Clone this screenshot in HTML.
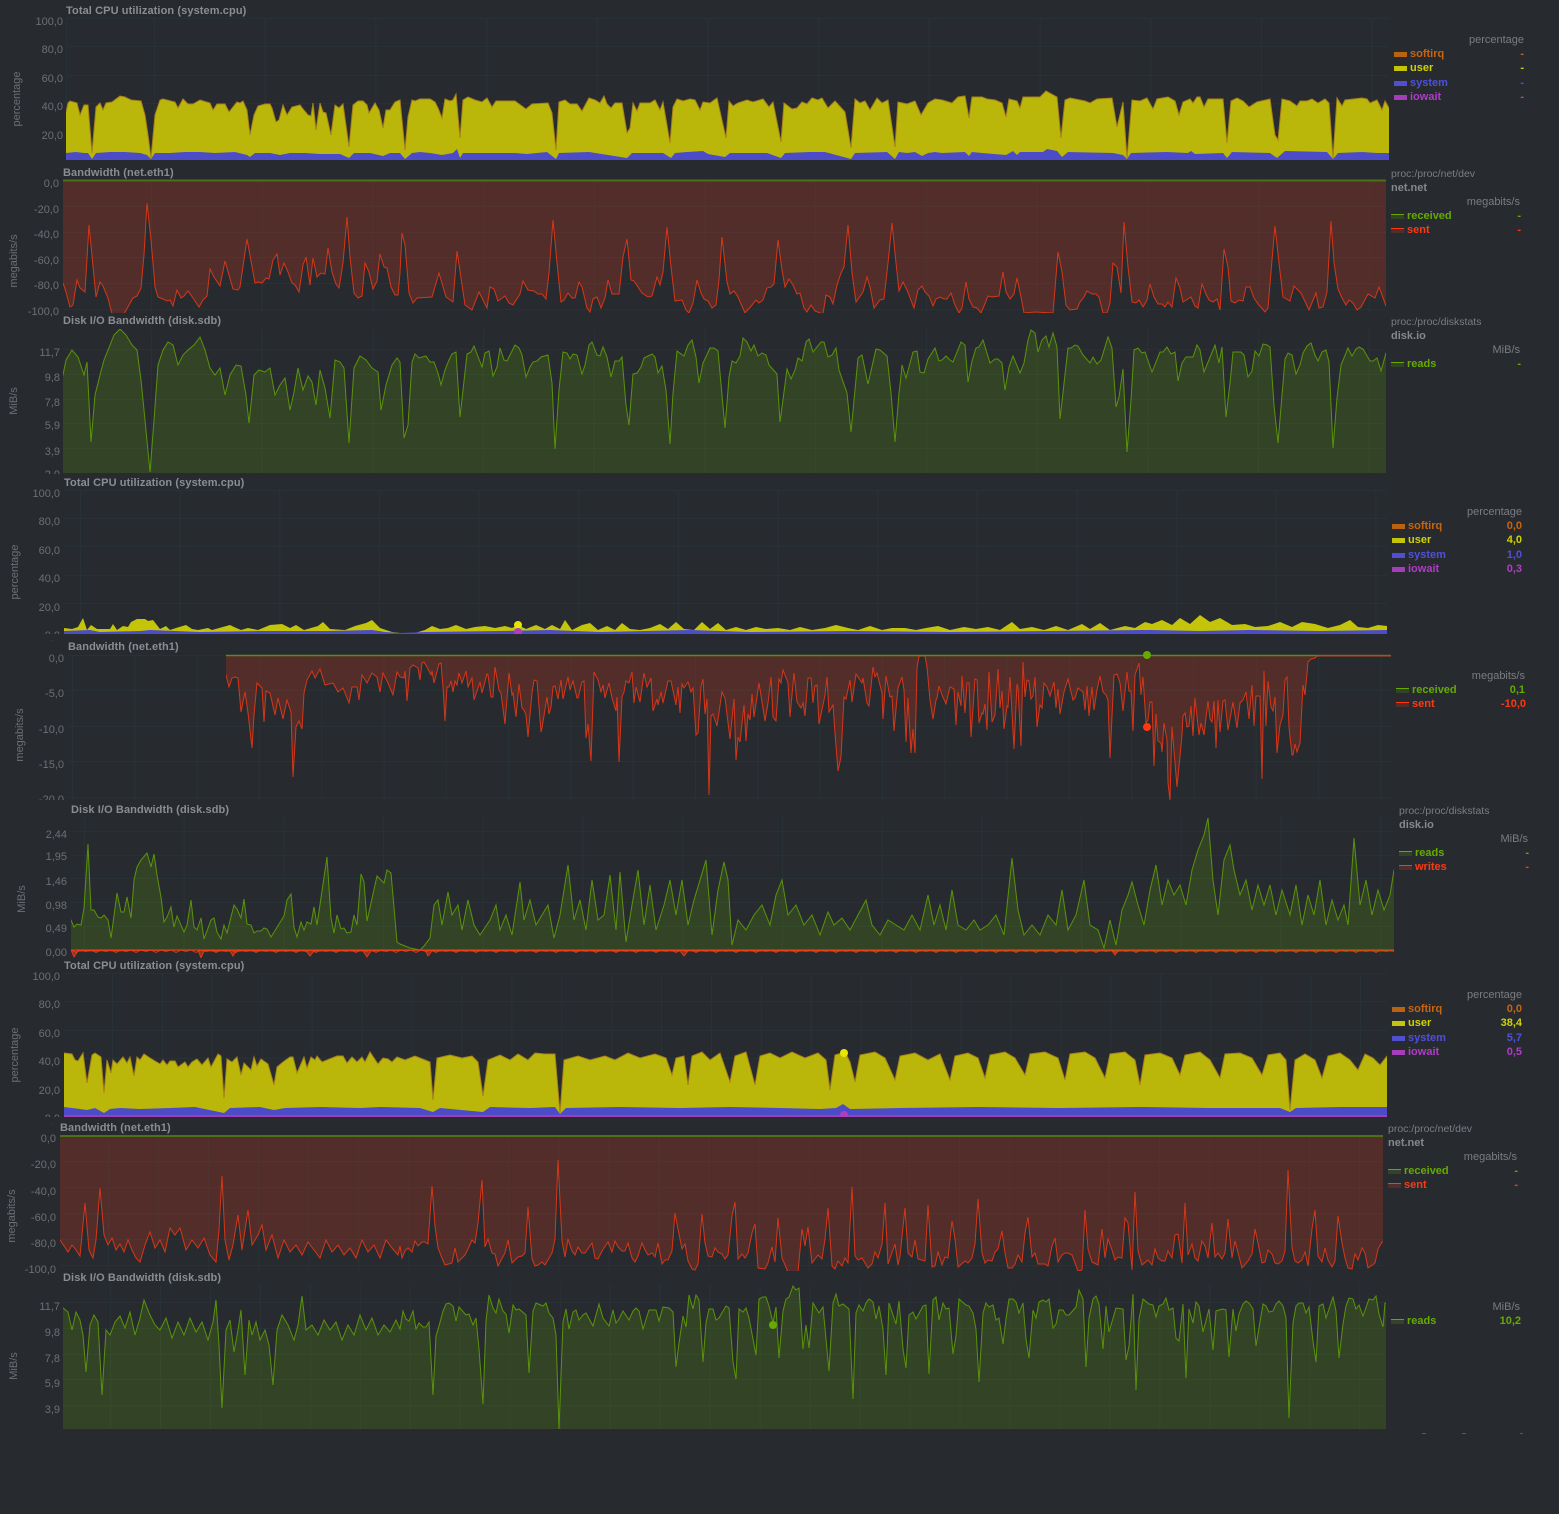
<!DOCTYPE html>
<html lang="en"><head><meta charset="utf-8"><title>Netdata charts</title>
<style>
html,body{margin:0;padding:0;background:#272b30;width:1559px;height:1514px;overflow:hidden}
svg{display:block}
text{font-family:"Liberation Sans",sans-serif;font-size:11px;fill:#6c7075}
.t{font-weight:bold;fill:#8a8d91;letter-spacing:.1px}
.c{fill:#7a7d81}
.p{fill:#7a7d81;font-size:10.500px}
.b{font-weight:bold;fill:#85888c}
.l{font-weight:bold}
.e{text-anchor:end}
.y{text-anchor:end}
.r{text-anchor:middle;fill:#6c7075}
.so{fill:#c8640f}.us{fill:#d2d200}.sy{fill:#4f4fdc}.io{fill:#ae3cc4}.gr{fill:#66aa00}.re{fill:#fe3912}
.g{stroke:#283236;stroke-width:1;fill:none}
.red{fill:#fe3912;fill-opacity:.2;stroke:#fe3912;stroke-opacity:.8;stroke-width:1}
.grn{fill:#66aa00;fill-opacity:.2;stroke:#66aa00;stroke-opacity:.8;stroke-width:1}
.user{fill:#bbb70a;stroke:#a8801a;stroke-width:1}
.sys{fill:#4c4cc8}
.iow{fill:#a03cb4}
</style></head><body>
<svg width="1559" height="1514" viewBox="0 0 1559 1514" xmlns="http://www.w3.org/2000/svg">
<defs><pattern id="w" x="71" y="947" width="20" height="10" patternUnits="userSpaceOnUse"><path d="M0,3 5,5.500 10,3 15,4.500 20,3" fill="none" stroke="#fe3912" stroke-opacity=".8"/></pattern></defs>

<!-- CHART 1 -->
<text class="t" x="66" y="14">Total CPU utilization (system.cpu)</text>
<path class="g" d="M66 18.500H1389M66 46.500H1389M66 75.500H1389M66 103.500H1389M66 132.500H1389"/>
<line x1="66" y1="89" x2="67" y2="89" stroke="#283236" stroke-width="142"/>
<line x1="154" y1="89" x2="1389" y2="89" stroke="#283236" stroke-width="142" stroke-dasharray="1 109.700"/>
<g class="y"><text class="y" x="63" y="25">100,0</text><text class="y" x="63" y="53">80,0</text><text class="y" x="63" y="82">60,0</text><text class="y" x="63" y="110">40,0</text><text class="y" x="63" y="139">20,0</text></g>
<text class="r" transform="translate(20 99) rotate(-90)">percentage</text>
<svg x="66" y="18" width="1323" height="142" viewBox="66 18 1323 142">
<path class="user" d="M50,112 66,112 68,103 70,101 77,103 80,115 84,105 88,105 92,153 96,107 100,103 103,110 106,103 112,102 120,96 125,97 131,100 141,101 145,115 148,135 151,158 155,115 160,100 163,99 175,102 178,108 183,99 188,104 193,104 200,100 210,103 213,110 217,104 225,104 229,112 237,102 240,103 243,101 247,110 250,135 254,115 258,106 265,104 270,104 272,108 276,122 279,120 283,105 287,115 292,107 300,105 303,109 308,115 311,116 313,103 316,130 320,103 323,112 326,113 331,135 335,105 339,108 343,104 349,147 353,105 358,101 363,101 367,105 369,113 375,103 379,110 383,128 386,110 390,110 395,102 400,100 405,150 408,117 412,100 415,101 420,99 430,99 435,102 438,108 442,118 445,99 450,101 453,100 456,94 460,138 463,100 468,97 475,100 482,102 487,98 492,107 496,101 515,101 526,109 532,104 548,103 552,113 556,150 559,102 565,100 570,104 577,104 582,111 589,98 595,100 600,103 604,96 607,104 611,108 615,103 622,103 627,133 630,128 633,103 637,111 640,103 650,103 655,100 660,110 663,102 670,143 673,107 677,99 683,101 690,99 695,100 700,110 703,102 710,103 717,98 726,138 729,101 733,106 738,103 747,100 753,102 763,99 769,107 773,102 781,142 784,103 792,109 797,108 802,102 807,104 812,98 818,100 822,98 828,108 835,101 845,112 851,148 855,99 860,103 865,101 870,110 877,98 882,103 888,100 895,147 898,102 907,104 915,101 921,115 928,103 935,99 942,100 952,103 958,97 965,96 969,118 972,97 982,97 987,99 995,100 1002,103 1006,117 1009,99 1017,101 1020,108 1023,97 1040,97 1046,91 1057,97 1061,138 1065,100 1070,98 1085,101 1090,103 1097,99 1112,98 1117,127 1123,102 1127,158 1132,100 1140,101 1147,98 1153,109 1157,99 1168,97 1175,101 1179,115 1183,102 1190,99 1193,103 1197,97 1200,97 1204,107 1208,99 1223,99 1227,143 1231,101 1237,98 1243,101 1249,107 1257,102 1270,99 1275,135 1278,140 1282,99 1290,101 1297,106 1300,101 1307,101 1312,99 1318,103 1325,99 1329,103 1333,158 1337,98 1342,106 1345,100 1362,98 1367,99 1370,103 1377,100 1382,110 1385,101 1389,108 1400,108 V175 H50 Z"/>
<path class="sys" d="M66,153 76,152 84,153 88,153 92,159 96,153 110,152 125,152 140,153 147,155 151,159 155,153 170,153 185,152 200,152 215,153 235,152 247,155 250,157 255,153 270,153 280,155 290,153 305,153 320,154 340,154 349,158 354,153 370,153 383,156 390,153 400,153 405,159 412,153 420,152 430,153 442,155 453,153 457,149 460,158 463,153 515,153 527,154 547,152 556,159 559,153 589,152 627,158 632,153 663,153 671,158 675,153 687,152 703,151 708,154 725,157 730,153 767,153 781,158 785,153 810,152 825,152 851,159 855,153 887,152 895,159 899,152 907,153 915,152 922,156 928,153 935,152 942,153 965,152 969,156 972,152 982,153 1006,155 1013,151 1017,155 1020,152 1043,152 1047,149 1057,151 1062,157 1068,152 1113,153 1123,155 1127,159 1131,153 1167,152 1188,153 1191,151 1195,154 1223,153 1227,158 1232,152 1270,153 1277,158 1285,151 1327,152 1333,159 1338,153 1362,152 1377,153 1389,153 V175 H66 Z"/>
</svg>
<text class="c e" x="1524" y="43">percentage</text>
<rect x="1394" y="52" width="13" height="5" fill="#b9620f"/><text class="l so" x="1410" y="57">softirq</text><text class="l so e" x="1524" y="57">-</text>
<rect x="1394" y="66" width="13" height="5" fill="#c4c40a"/><text class="l us" x="1410" y="71">user</text><text class="l us e" x="1524" y="71">-</text>
<rect x="1394" y="81" width="13" height="5" fill="#4f4fd0"/><text class="l sy" x="1410" y="86">system</text><text class="l sy e" x="1524" y="86">-</text>
<rect x="1394" y="95" width="13" height="5" fill="#a53cb8"/><text class="l io" x="1410" y="100">iowait</text><text class="l io e" x="1524" y="100">-</text>

<!-- CHART 2 -->
<text class="t" x="63" y="176">Bandwidth (net.eth1)</text>
<path class="g" d="M63 206.500H1386M63 232.500H1386M63 257.500H1386M63 283.500H1386M63 309.500H1386"/>
<line x1="151" y1="247" x2="1386" y2="247" stroke="#283236" stroke-width="132" stroke-dasharray="1 109.700"/>
<text class="y" x="59" y="187">0,0</text><text class="y" x="59" y="213">-20,0</text><text class="y" x="59" y="238">-40,0</text><text class="y" x="59" y="264">-60,0</text><text class="y" x="59" y="289">-80,0</text><text class="y" x="59" y="315">-100,0</text>
<text class="r" transform="translate(17 261) rotate(-90)">megabits/s</text>
<svg x="63" y="181" width="1323" height="132" viewBox="63 181 1323 132">
<path class="red" d="M50,283 63,283 66,292 70,307 73,305 77,280 80,288 85,292 89,225 96,297 100,282 103,286 108,298 112,314 124,314 129,305 133,298 137,296 141,288 144,255 147,203 151,240 155,287 158,297 163,299 167,301 170,300 173,306 177,290 181,298 184,296 188,291 193,298 199,307 203,300 207,296 210,269 214,277 220,286 225,261 233,289 238,290 240,287 247,239 255,283 258,282 262,283 266,278 269,279 273,260 277,254 280,275 284,263 288,272 292,283 295,285 299,292 303,265 306,257 310,285 313,258 317,277 321,273 325,274 328,248 332,272 336,284 339,288 343,263 347,217 350,257 354,293 358,298 362,296 365,263 369,272 373,289 377,281 380,254 384,267 387,268 391,287 395,295 398,295 400,273 402,233 405,245 409,293 413,303 417,298 432,297 439,273 446,297 453,302 457,251 465,305 472,310 479,292 487,308 490,287 494,289 498,301 505,296 509,303 513,305 520,294 523,281 528,290 534,291 538,294 542,294 546,299 549,273 553,220 557,263 561,302 564,300 568,293 572,298 575,298 579,282 582,287 587,308 590,312 593,299 597,297 601,308 605,298 608,280 612,294 619,294 623,257 627,239 631,280 634,281 642,293 648,297 652,296 657,277 660,285 663,272 667,227 671,267 675,301 682,300 686,310 689,313 693,303 697,280 701,293 704,299 708,301 712,308 716,305 719,280 722,237 727,282 730,294 734,291 738,297 745,313 752,305 756,300 759,303 763,300 767,288 771,287 774,284 778,240 782,270 785,287 789,279 793,285 797,294 800,293 804,308 807,312 811,305 815,311 823,314 826,295 830,297 833,304 837,285 841,273 844,267 848,225 852,273 856,302 863,292 867,277 870,287 874,308 880,300 884,299 888,263 892,223 896,263 899,291 903,282 907,290 914,308 918,290 922,286 925,292 929,296 933,306 936,299 940,297 944,299 947,299 951,293 955,305 959,313 962,308 966,282 969,299 973,307 977,308 981,313 984,306 988,296 992,297 999,296 1003,272 1006,292 1010,299 1014,294 1017,278 1021,297 1024,313 1035,312 1053,313 1058,252 1062,272 1066,305 1070,310 1077,309 1080,302 1084,297 1087,291 1092,294 1096,294 1099,297 1103,313 1107,313 1110,303 1113,263 1117,267 1121,293 1124,222 1128,267 1132,302 1136,303 1139,300 1143,307 1147,300 1150,284 1154,297 1158,304 1162,304 1165,307 1168,302 1172,307 1176,278 1180,288 1183,302 1191,297 1195,306 1198,308 1202,284 1206,294 1209,300 1213,302 1217,299 1220,310 1224,249 1228,267 1231,301 1235,303 1239,300 1243,301 1246,287 1250,287 1254,298 1258,304 1265,312 1268,308 1272,260 1275,226 1279,263 1283,297 1290,301 1294,286 1301,293 1309,310 1316,293 1319,308 1323,307 1327,292 1331,221 1334,263 1338,289 1342,298 1346,305 1349,300 1353,303 1357,310 1361,307 1368,294 1375,298 1379,287 1386,306 1400,306 V170 H50 Z"/>
</svg>
<path d="M63 180.500H1386" stroke="#4c7018" stroke-width="2" fill="none"/>
<text class="p" x="1391" y="177">proc:/proc/net/dev</text><text class="b" x="1391" y="191">net.net</text>
<text class="c e" x="1520" y="205">megabits/s</text>
<rect x="1391" y="214" width="13" height="5" fill="#334426"/><rect x="1391" y="214" width="13" height="1" fill="#66aa00"/><text class="l gr" x="1407" y="219">received</text><text class="l gr e" x="1521" y="219">-</text>
<rect x="1391" y="228" width="13" height="5" fill="#522e2a"/><rect x="1391" y="228" width="13" height="1" fill="#fe3912"/><text class="l re" x="1407" y="233">sent</text><text class="l re e" x="1521" y="233">-</text>

<!-- CHART 3 -->
<text class="t" x="63" y="324">Disk I/O Bandwidth (disk.sdb)</text>
<path class="g" d="M63 349.500H1386M63 374.500H1386M63 399.500H1386M63 423.500H1386M63 448.500H1386"/>
<line x1="151" y1="401" x2="1386" y2="401" stroke="#283236" stroke-width="144" stroke-dasharray="1 109.700"/>
<text class="y" x="60" y="356">11,7</text><text class="y" x="60" y="381">9,8</text><text class="y" x="60" y="406">7,8</text><text class="y" x="60" y="429">5,9</text><text class="y" x="60" y="455">3,9</text><text class="y" x="60" y="478">2,0</text>
<text class="r" transform="translate(17 401) rotate(-90)">MiB/s</text>
<rect x="20" y="474" width="50" height="6" fill="#272b30"/>
<svg x="63" y="329" width="1323" height="144" viewBox="63 329 1323 144">
<path class="grn" d="M50,375 63,375 66,360 72,350 78,357 84,375 87,362 91,442 95,395 100,375 104,360 110,345 114,335 120,329 126,335 132,345 137,350 141,380 145,420 150,472 154,420 158,365 163,350 168,342 173,345 178,365 183,355 188,350 194,345 200,337 205,350 210,368 215,375 220,368 225,395 230,375 236,365 241,366 246,395 249,423 254,375 259,370 265,372 270,368 275,395 280,385 285,378 290,410 294,392 298,368 303,390 308,376 312,382 316,405 320,370 325,388 330,418 335,360 340,362 344,368 349,443 354,368 360,356 366,360 372,368 378,372 381,410 386,385 392,365 397,358 400,362 404,438 408,425 412,362 415,354 419,358 426,356 430,362 434,362 438,373 441,385 445,370 449,360 452,354 456,352 460,417 467,354 471,352 474,346 482,367 485,353 489,351 493,376 497,367 500,348 504,360 507,361 515,345 519,348 522,355 526,377 530,367 533,362 537,361 541,357 548,355 552,383 555,449 559,390 563,352 567,353 570,359 573,354 577,355 582,374 585,365 589,345 592,342 597,355 600,356 603,347 607,357 611,377 615,361 619,361 622,357 626,405 629,425 633,374 637,373 641,367 644,358 652,354 655,357 658,373 662,366 666,390 670,444 673,393 677,351 684,356 688,345 692,340 696,357 699,383 703,363 710,348 714,348 718,351 725,428 729,377 732,361 736,363 740,356 743,338 747,342 751,351 754,345 758,356 762,353 766,355 769,365 777,374 780,422 787,369 791,379 795,370 798,358 802,361 806,342 809,339 813,352 821,342 824,342 828,357 832,355 836,348 839,370 847,393 851,432 858,358 862,355 868,384 876,349 880,350 887,356 891,393 895,442 899,393 900,385 902,365 906,378 913,352 917,351 920,372 924,373 928,359 935,348 939,361 942,360 946,356 950,360 953,362 961,342 965,345 968,382 972,361 976,348 979,347 983,340 990,363 995,359 998,359 1002,363 1005,390 1009,367 1013,356 1020,373 1024,363 1028,340 1031,330 1035,333 1038,352 1042,340 1046,336 1049,347 1053,333 1057,347 1060,419 1068,348 1071,348 1075,345 1078,346 1083,355 1090,363 1093,357 1097,364 1101,360 1108,337 1112,348 1116,407 1119,397 1123,369 1127,452 1131,400 1134,350 1138,348 1142,353 1145,352 1152,372 1160,352 1163,352 1167,347 1171,354 1175,352 1178,381 1182,363 1186,357 1193,357 1197,345 1200,350 1204,372 1215,345 1219,363 1222,347 1226,417 1230,383 1233,352 1241,352 1244,355 1248,377 1252,371 1255,351 1259,356 1263,344 1267,345 1270,347 1274,405 1278,443 1285,359 1288,353 1292,355 1296,374 1300,365 1303,353 1307,346 1311,343 1315,355 1318,361 1322,352 1326,350 1329,362 1333,448 1337,398 1341,365 1348,348 1352,356 1356,349 1359,347 1363,349 1370,361 1373,361 1377,358 1381,371 1386,353 1400,353 V490 H50 Z"/>
</svg>
<text class="p" x="1391" y="325">proc:/proc/diskstats</text><text class="b" x="1391" y="339">disk.io</text>
<text class="c e" x="1520" y="353">MiB/s</text>
<rect x="1391" y="362" width="13" height="5" fill="#334426"/><rect x="1391" y="362" width="13" height="1" fill="#66aa00"/><text class="l gr" x="1407" y="367">reads</text><text class="l gr e" x="1521" y="367">-</text>

<!-- CHART 4 -->
<text class="t" x="64" y="486">Total CPU utilization (system.cpu)</text>
<path class="g" d="M64 490.500H1387M64 518.500H1387M64 546.500H1387M64 575.500H1387M64 603.500H1387"/>
<line x1="80" y1="562" x2="1387" y2="562" stroke="#283236" stroke-width="144" stroke-dasharray="1 98.650"/>
<text class="y" x="60" y="497">100,0</text><text class="y" x="60" y="525">80,0</text><text class="y" x="60" y="554">60,0</text><text class="y" x="60" y="582">40,0</text><text class="y" x="60" y="611">20,0</text><text class="y" x="60" y="639">0,0</text>
<text class="r" transform="translate(18 572) rotate(-90)">percentage</text>
<rect x="20" y="634" width="50" height="6" fill="#272b30"/>
<svg x="64" y="490" width="1323" height="144" viewBox="64 490 1323 144">
<path d="M64,628 72,629 78,627 83,618 87,630 91,625 97,629 110,629 113,624 117,630 123,626 128,627 131,622 137,619 145,619 148,621 153,620 160,629 166,626 170,630 176,628 186,625 192,629 198,630 208,628 212,630 230,625 234,627 241,630 248,628 258,630 270,625 282,624 290,628 296,625 304,630 318,626 323,622 330,629 345,630 355,626 366,623 372,620 380,628 392,632 400,633 415,633 425,630 432,626 440,629 448,628 456,625 466,629 475,627 485,626 495,628 505,626 512,628 518,625 526,629 536,625 545,629 552,625 560,629 565,620 572,630 582,625 590,623 598,630 607,626 615,630 622,623 630,629 640,630 650,628 660,624 668,629 676,622 684,629 694,630 702,622 710,629 718,623 726,630 736,627 746,630 756,627 766,629 778,628 790,630 800,627 812,630 825,628 836,625 848,628 858,630 870,626 882,630 892,628 905,628 916,630 926,628 938,626 950,630 964,627 976,629 988,627 1000,630 1012,622 1020,629 1032,627 1044,630 1056,626 1068,630 1082,624 1090,629 1100,623 1110,630 1125,626 1135,628 1145,622 1152,624 1162,620 1172,625 1180,618 1190,624 1200,615 1210,622 1220,618 1232,625 1245,624 1255,627 1268,626 1280,622 1292,627 1302,622 1315,624 1328,628 1340,625 1350,620 1358,627 1368,628 1378,625 1387,626 V650 H64 Z" fill="#c4c40a"/>
<path class="sys" d="M64,631 90,630 100,632 140,631 150,630 200,632 260,631 330,631 372,630 385,632 400,633 425,632 500,631 550,630 600,632 690,630 750,632 850,631 950,632 1050,631 1150,630 1200,631 1250,630 1320,631 1387,630 V650 H64 Z"/>
</svg>
<circle cx="518" cy="625" r="4" fill="#e6e600"/>
<circle cx="518" cy="632" r="4" fill="#ae3cc4"/>
<rect x="510" y="634" width="20" height="4" fill="#272b30"/>
<text class="c e" x="1522" y="515">percentage</text>
<rect x="1392" y="524" width="13" height="5" fill="#b9620f"/><text class="l so" x="1408" y="529">softirq</text><text class="l so e" x="1522" y="529">0,0</text>
<rect x="1392" y="538" width="13" height="5" fill="#c4c40a"/><text class="l us" x="1408" y="543">user</text><text class="l us e" x="1522" y="543">4,0</text>
<rect x="1392" y="553" width="13" height="5" fill="#4f4fd0"/><text class="l sy" x="1408" y="558">system</text><text class="l sy e" x="1522" y="558">1,0</text>
<rect x="1392" y="567" width="13" height="5" fill="#a53cb8"/><text class="l io" x="1408" y="572">iowait</text><text class="l io e" x="1522" y="572">0,3</text>

<!-- CHART 5 -->
<text class="t" x="68" y="650">Bandwidth (net.eth1)</text>
<path class="g" d="M68 655.500H1391M68 690.500H1391M68 726.500H1391M68 761.500H1391M68 797.500H1391"/>
<line x1="72" y1="728" x2="1391" y2="728" stroke="#283236" stroke-width="145" stroke-dasharray="1 61.300"/>
<text class="y" x="64" y="662">0,0</text><text class="y" x="64" y="697">-5,0</text><text class="y" x="64" y="733">-10,0</text><text class="y" x="64" y="768">-15,0</text><text class="y" x="64" y="803">-20,0</text>
<rect x="30" y="800" width="36" height="6" fill="#272b30"/>
<text class="r" transform="translate(23 735) rotate(-90)">megabits/s</text>
<svg x="226" y="655" width="1165" height="145" viewBox="226 655 1165 145">
<path class="red" d="M215,675 226,675 229,687 232,678 235,677 238,678 241,712 245,692 248,713 252,748 254,715 257,683 262,688 264,722 266,691 270,693 275,715 278,698 283,719 287,700 291,712 293,777 296,727 299,721 302,729 304,693 307,680 312,671 315,678 320,669 325,685 333,683 338,692 343,688 349,703 352,687 357,687 359,700 362,675 367,683 372,673 377,677 380,692 383,673 388,683 393,695 397,672 400,677 404,678 405,671 407,701 410,668 413,665 418,668 420,680 422,663 424,662 427,667 431,675 432,671 434,683 439,664 441,663 443,687 445,721 447,687 449,687 451,681 453,692 455,681 457,685 459,673 462,683 466,671 468,687 472,678 474,700 480,682 482,693 487,674 488,675 491,697 493,697 495,667 499,690 501,693 505,724 509,673 512,695 513,693 516,717 519,684 522,708 524,710 526,715 528,737 532,693 534,680 537,681 541,732 542,728 547,697 549,714 551,707 553,687 555,686 558,699 561,680 563,699 568,677 570,690 573,681 577,698 578,698 582,682 584,681 586,738 588,724 591,761 594,672 598,680 601,692 603,685 605,698 609,683 612,698 616,711 617,697 619,762 622,697 624,692 626,681 629,683 632,672 634,703 636,687 640,702 644,673 647,687 651,678 653,711 657,699 658,705 661,692 663,703 668,681 671,681 676,705 678,687 680,713 682,684 684,688 688,682 691,692 693,688 696,735 698,733 701,687 703,679 705,714 707,699 709,795 711,716 713,714 717,726 722,692 725,698 730,739 734,699 736,760 738,737 740,742 744,705 746,741 748,714 750,720 752,694 754,717 759,683 765,721 768,703 771,677 773,717 776,721 779,679 781,683 783,670 788,683 790,717 794,673 797,702 801,708 803,703 805,716 808,678 811,678 813,703 815,686 817,685 819,724 825,695 827,677 829,712 833,705 835,733 838,771 841,757 844,697 846,699 850,680 852,702 856,674 862,683 863,678 867,703 869,706 873,667 875,677 877,673 882,693 883,719 886,676 890,697 892,696 894,731 898,688 902,677 904,690 906,742 908,698 911,753 913,729 915,753 917,668 919,656 925,656 927,667 930,700 933,719 936,700 937,698 939,686 942,695 946,704 950,687 954,689 956,725 958,692 961,706 962,676 965,713 967,683 969,683 971,737 975,679 977,680 979,723 982,713 983,714 985,704 987,730 989,672 992,722 995,715 998,669 1000,708 1002,691 1004,729 1007,706 1008,707 1010,677 1014,749 1017,684 1018,688 1021,746 1023,662 1025,697 1027,680 1029,681 1031,699 1033,696 1035,677 1037,727 1040,705 1042,708 1044,683 1047,687 1050,696 1054,682 1056,708 1058,689 1060,714 1064,692 1068,679 1073,700 1075,698 1078,688 1083,692 1085,710 1087,686 1089,716 1092,687 1094,710 1097,690 1100,676 1103,692 1106,695 1108,700 1110,758 1114,675 1117,674 1120,683 1123,711 1127,672 1129,691 1131,691 1133,731 1135,675 1139,663 1141,695 1143,677 1146,723 1148,720 1150,702 1152,702 1154,766 1156,714 1158,741 1161,743 1162,752 1164,723 1167,740 1168,783 1170,800 1172,727 1177,787 1182,735 1183,716 1185,713 1187,727 1189,726 1191,706 1193,736 1195,698 1199,735 1201,723 1204,735 1208,701 1210,719 1212,722 1214,701 1216,748 1218,700 1220,732 1223,701 1225,700 1228,730 1233,702 1237,728 1240,703 1243,700 1246,692 1249,719 1252,685 1254,726 1256,696 1260,696 1262,779 1264,671 1266,726 1268,681 1271,707 1273,711 1275,697 1277,753 1280,725 1283,715 1285,680 1287,677 1289,727 1292,755 1293,755 1295,744 1297,752 1300,743 1303,685 1305,695 1308,662 1311,659 1315,658 1317,656 1400,656 V640 H215 Z"/>
</svg>
<path d="M226 655.500H1317" stroke="#5e8a14" stroke-width="1.500" fill="none"/><path d="M1317 655.500H1391" stroke="#85602a" stroke-width="1.500" fill="none"/>
<circle cx="1147" cy="655" r="4" fill="#66aa00"/>
<circle cx="1147" cy="727" r="4" fill="#fe3912"/>
<text class="c e" x="1525" y="679">megabits/s</text>
<rect x="1396" y="688" width="13" height="5" fill="#334426"/><rect x="1396" y="688" width="13" height="1" fill="#66aa00"/><text class="l gr" x="1412" y="693">received</text><text class="l gr e" x="1525" y="693">0,1</text>
<rect x="1396" y="702" width="13" height="5" fill="#522e2a"/><rect x="1396" y="702" width="13" height="1" fill="#fe3912"/><text class="l re" x="1412" y="707">sent</text><text class="l re e" x="1526" y="707">-10,0</text>

<!-- CHART 6 -->
<text class="t" x="71" y="813">Disk I/O Bandwidth (disk.sdb)</text>
<path class="g" d="M71 831.500H1394M71 855.500H1394M71 878.500H1394M71 902.500H1394M71 926.500H1394"/>
<line x1="84" y1="887" x2="1394" y2="887" stroke="#283236" stroke-width="141" stroke-dasharray="1 98.700"/>
<text class="y" x="67" y="838">2,44</text><text class="y" x="67" y="860">1,95</text><text class="y" x="67" y="885">1,46</text><text class="y" x="67" y="909">0,98</text><text class="y" x="67" y="932">0,49</text><text class="y" x="67" y="956">0,00</text>
<text class="r" transform="translate(25 899) rotate(-90)">MiB/s</text>
<svg x="71" y="817" width="1323" height="141" viewBox="71 817 1323 141">
<path class="grn" d="M60,920 71,920 74,927 77,924 81,925 84,908 88,844 91,910 94,910 98,917 101,918 104,915 108,920 111,938 117,893 121,912 124,912 127,897 131,918 134,880 137,867 141,860 147,853 151,867 154,854 157,875 161,897 164,922 167,917 171,907 174,927 177,916 184,932 187,925 191,900 194,927 197,930 201,918 204,939 211,920 214,918 217,932 221,939 224,925 227,933 234,905 237,909 241,918 244,899 247,924 251,925 254,933 257,931 261,931 264,928 267,929 271,937 284,916 287,900 291,894 294,927 297,937 301,922 304,930 307,922 311,924 314,907 317,925 327,857 331,918 334,933 337,915 341,929 344,928 347,933 351,932 354,915 357,925 361,874 364,882 367,921 377,876 384,883 387,870 391,873 397,942 400,944 410,948 420,950 424,946 430,938 434,905 438,900 442,925 448,892 452,915 458,905 462,930 468,900 474,925 480,935 490,920 496,905 500,930 506,915 512,935 520,882 524,920 530,900 536,925 542,915 548,905 554,938 560,915 568,865 574,920 580,900 586,930 592,880 598,920 604,915 610,875 616,930 620,872 626,942 632,905 638,870 644,925 650,885 656,930 664,905 670,880 676,915 682,880 688,925 694,900 700,880 706,860 712,935 718,890 724,862 728,880 732,945 738,920 746,930 754,915 762,905 770,925 776,895 782,880 788,915 796,905 804,925 812,915 820,935 828,912 834,925 842,918 850,930 858,915 866,900 872,925 880,935 888,920 896,925 904,930 912,915 920,930 928,895 934,925 940,905 946,930 952,890 958,925 966,930 974,920 980,930 988,925 996,915 1004,935 1012,858 1018,910 1024,935 1032,925 1040,935 1048,915 1056,925 1062,890 1068,930 1076,915 1084,880 1090,925 1098,930 1104,948 1110,920 1116,945 1122,910 1128,895 1132,882 1138,905 1144,925 1150,890 1156,865 1162,905 1168,880 1174,895 1180,885 1186,905 1192,870 1198,850 1204,835 1208,818 1213,880 1218,915 1224,860 1230,845 1234,870 1240,895 1246,880 1252,910 1258,885 1264,905 1270,885 1276,915 1282,890 1290,915 1296,885 1302,925 1308,895 1314,915 1320,880 1326,925 1332,900 1338,920 1344,905 1348,925 1354,838 1360,905 1366,880 1372,915 1378,890 1384,910 1390,895 1394,870 1405,870 V950 H60 Z"/>
<path d="M71,950 74,957 78,951 198,950 201,958 204,951 230,951 233,956 236,951 306,951 310,956 314,951 363,951 367,957 371,951 425,950 428,956 432,951 680,951 684,956 688,951 1112,951 1115,955 1118,951 1394,951 Z" fill="#fe3912" fill-opacity=".5" stroke="#fe3912" stroke-opacity=".8"/>
<rect x="71" y="947" width="1323" height="10" fill="url(#w)"/>
</svg>
<text class="p" x="1399" y="814">proc:/proc/diskstats</text><text class="b" x="1399" y="828">disk.io</text>
<text class="c e" x="1528" y="842">MiB/s</text>
<rect x="1399" y="851" width="13" height="5" fill="#334426"/><rect x="1399" y="851" width="13" height="1" fill="#66aa00"/><text class="l gr" x="1415" y="856">reads</text><text class="l gr e" x="1529" y="856">-</text>
<rect x="1399" y="865" width="13" height="5" fill="#522e2a"/><rect x="1399" y="865" width="13" height="1" fill="#fe3912"/><text class="l re" x="1415" y="870">writes</text><text class="l re e" x="1529" y="870">-</text>

<!-- CHART 7 -->
<text class="t" x="64" y="969">Total CPU utilization (system.cpu)</text>
<path class="g" d="M64 973.500H1387M64 1001.500H1387M64 1030.500H1387M64 1058.500H1387M64 1086.500H1387"/>
<line x1="112" y1="1045" x2="1387" y2="1045" stroke="#283236" stroke-width="144" stroke-dasharray="1 48.920"/>
<text class="y" x="60" y="980">100,0</text><text class="y" x="60" y="1008">80,0</text><text class="y" x="60" y="1037">60,0</text><text class="y" x="60" y="1065">40,0</text><text class="y" x="60" y="1094">20,0</text><text class="y" x="60" y="1122">0,0</text>
<rect x="30" y="1117" width="36" height="6" fill="#272b30"/>
<text class="r" transform="translate(18 1055) rotate(-90)">percentage</text>
<svg x="64" y="973" width="1323" height="144" viewBox="64 973 1323 144">
<path class="user" d="M50,1053 64,1053 72,1054 75,1060 78,1061 83,1053 87,1083 92,1055 95,1053 101,1057 104,1093 107,1060 111,1073 113,1060 117,1064 123,1057 127,1063 130,1057 134,1076 137,1057 140,1060 144,1054 150,1058 160,1064 163,1060 167,1065 170,1061 175,1061 178,1067 185,1062 188,1067 192,1062 197,1059 202,1065 208,1058 211,1067 218,1054 221,1056 224,1098 227,1059 232,1062 237,1057 241,1075 244,1063 251,1070 254,1057 257,1066 261,1059 268,1064 274,1085 277,1067 283,1062 290,1057 293,1057 297,1073 304,1057 307,1068 311,1057 315,1060 317,1056 322,1062 337,1056 343,1056 347,1063 352,1057 357,1062 362,1057 365,1062 370,1052 378,1064 383,1058 388,1059 392,1062 397,1057 405,1060 415,1056 425,1060 430,1062 433,1100 437,1058 450,1055 462,1058 472,1056 478,1062 483,1096 488,1060 500,1055 510,1060 518,1054 528,1060 535,1053 545,1054 555,1054 560,1113 564,1060 578,1056 590,1060 605,1056 615,1060 628,1053 640,1058 655,1054 666,1058 672,1075 676,1058 684,1056 688,1085 692,1056 702,1052 710,1060 720,1053 730,1082 735,1056 746,1052 755,1085 760,1056 770,1053 780,1058 792,1052 805,1058 818,1053 826,1060 830,1090 835,1055 845,1052 850,1062 855,1082 860,1055 875,1052 885,1058 895,1080 900,1056 915,1053 928,1060 940,1054 950,1080 955,1056 968,1053 978,1058 985,1078 990,1055 1005,1052 1015,1058 1025,1075 1030,1054 1045,1052 1058,1058 1065,1080 1070,1054 1085,1052 1095,1058 1105,1078 1110,1054 1125,1052 1135,1060 1140,1085 1145,1055 1160,1053 1172,1058 1180,1075 1185,1055 1200,1052 1210,1060 1220,1078 1225,1054 1240,1053 1252,1058 1262,1075 1268,1055 1280,1053 1286,1060 1290,1110 1295,1060 1305,1054 1315,1060 1322,1078 1328,1056 1340,1053 1350,1060 1358,1070 1365,1054 1373,1058 1380,1065 1387,1056 1400,1056 V1130 H50 Z"/>
<path class="sys" d="M64,1107 72,1108 80,1109 87,1110 95,1108 104,1113 110,1109 120,1108 140,1109 170,1108 195,1107 224,1113 230,1108 260,1107 274,1110 285,1108 320,1107 360,1108 380,1107 420,1108 433,1112 440,1108 483,1112 490,1107 530,1108 555,1107 560,1114 566,1108 620,1107 680,1108 730,1107 780,1108 820,1109 836,1108 843,1104 850,1109 900,1108 980,1107 1060,1108 1140,1107 1210,1108 1280,1108 1290,1112 1296,1108 1340,1107 1387,1107 V1130 H64 Z"/>
<path class="iow" d="M64,1115 200,1115 400,1115 600,1115 800,1115 1000,1115 1200,1115 1387,1115 V1130 H64 Z"/>
</svg>
<circle cx="844" cy="1053" r="4" fill="#e6e600"/>
<circle cx="844" cy="1115" r="4" fill="#ae3cc4"/>
<rect x="836" y="1117" width="16" height="5" fill="#272b30"/>
<text class="c e" x="1522" y="998">percentage</text>
<rect x="1392" y="1007" width="13" height="5" fill="#b9620f"/><text class="l so" x="1408" y="1012">softirq</text><text class="l so e" x="1522" y="1012">0,0</text>
<rect x="1392" y="1021" width="13" height="5" fill="#c4c40a"/><text class="l us" x="1408" y="1026">user</text><text class="l us e" x="1522" y="1026">38,4</text>
<rect x="1392" y="1036" width="13" height="5" fill="#4f4fd0"/><text class="l sy" x="1408" y="1041">system</text><text class="l sy e" x="1522" y="1041">5,7</text>
<rect x="1392" y="1050" width="13" height="5" fill="#a53cb8"/><text class="l io" x="1408" y="1055">iowait</text><text class="l io e" x="1522" y="1055">0,5</text>

<!-- CHART 8 -->
<text class="t" x="60" y="1131">Bandwidth (net.eth1)</text>
<path class="g" d="M60 1161.500H1383M60 1187.500H1383M60 1213.500H1383M60 1239.500H1383M60 1265.500H1383"/>
<line x1="108" y1="1203" x2="1383" y2="1203" stroke="#283236" stroke-width="134" stroke-dasharray="1 49.050"/>
<text class="y" x="56" y="1142">0,0</text><text class="y" x="56" y="1168">-20,0</text><text class="y" x="56" y="1195">-40,0</text><text class="y" x="56" y="1221">-60,0</text><text class="y" x="56" y="1247">-80,0</text><text class="y" x="56" y="1273">-100,0</text>
<text class="r" transform="translate(15 1216) rotate(-90)">megabits/s</text>
<svg x="60" y="1136" width="1323" height="135" viewBox="60 1136 1323 135">
<path class="red" d="M50,1240 60,1240 64,1246 68,1252 72,1245 76,1250 80,1256 85,1203 89,1250 93,1258 96,1240 100,1188 104,1235 108,1245 112,1238 116,1250 120,1244 124,1252 128,1240 132,1250 136,1258 140,1262 145,1245 150,1232 155,1248 160,1240 165,1252 170,1228 175,1235 180,1228 186,1250 192,1240 198,1248 204,1238 210,1255 216,1262 219,1230 222,1176 225,1240 229,1260 233,1245 238,1215 242,1250 245,1230 248,1210 252,1245 258,1235 262,1225 266,1250 272,1235 278,1258 284,1240 290,1252 296,1245 302,1255 308,1242 314,1250 320,1258 326,1240 332,1252 338,1245 344,1255 350,1248 356,1258 362,1240 368,1252 374,1245 380,1258 386,1240 392,1248 398,1255 400,1246 402,1258 405,1251 408,1248 412,1252 415,1241 418,1246 422,1242 425,1242 428,1244 432,1186 435,1226 438,1248 442,1258 445,1265 452,1263 455,1248 458,1262 465,1255 468,1249 472,1240 475,1243 478,1223 482,1180 485,1247 488,1239 492,1253 495,1254 498,1266 505,1253 508,1240 512,1263 518,1257 522,1256 525,1253 528,1207 532,1259 535,1266 538,1265 542,1262 545,1265 552,1253 555,1239 558,1160 562,1241 565,1257 568,1239 572,1251 575,1255 578,1247 582,1253 585,1253 592,1243 595,1258 598,1259 602,1251 608,1242 612,1252 615,1241 618,1247 622,1251 625,1251 628,1243 632,1258 635,1262 638,1256 642,1243 645,1250 648,1255 652,1253 655,1257 658,1243 662,1264 665,1260 668,1260 672,1251 675,1213 678,1229 682,1249 685,1244 688,1261 692,1269 695,1270 698,1264 702,1214 705,1243 708,1256 712,1257 715,1248 718,1252 722,1254 725,1259 728,1255 732,1216 735,1202 738,1259 742,1254 745,1258 748,1253 752,1233 755,1224 758,1268 765,1269 768,1263 772,1247 775,1262 778,1218 782,1258 788,1272 798,1272 802,1229 805,1246 808,1227 812,1263 818,1255 822,1259 825,1239 828,1208 832,1266 835,1269 838,1261 842,1266 845,1258 848,1263 852,1187 855,1256 858,1260 862,1258 868,1268 872,1264 875,1252 878,1258 882,1244 885,1203 888,1264 895,1244 898,1265 900,1256 905,1208 908,1253 912,1257 915,1240 918,1259 925,1261 928,1205 932,1267 935,1266 938,1252 942,1265 945,1257 948,1258 952,1221 955,1239 958,1267 965,1261 968,1263 972,1258 975,1244 978,1199 982,1253 985,1263 988,1260 992,1261 995,1252 998,1249 1002,1231 1005,1253 1008,1268 1012,1268 1015,1264 1018,1255 1022,1262 1025,1233 1028,1217 1032,1257 1035,1253 1038,1264 1045,1264 1048,1266 1052,1246 1055,1238 1058,1262 1062,1255 1065,1253 1068,1253 1072,1255 1075,1263 1078,1271 1082,1270 1085,1210 1088,1249 1092,1262 1098,1265 1102,1229 1105,1258 1108,1239 1112,1250 1115,1260 1118,1257 1122,1258 1125,1218 1128,1223 1132,1270 1135,1192 1138,1251 1142,1265 1148,1260 1152,1265 1155,1249 1158,1258 1162,1261 1165,1261 1168,1251 1172,1258 1175,1235 1178,1234 1182,1263 1185,1203 1188,1255 1192,1244 1195,1258 1198,1261 1202,1241 1205,1246 1208,1258 1212,1223 1215,1257 1218,1253 1222,1259 1225,1253 1228,1219 1232,1258 1235,1241 1242,1268 1248,1261 1252,1254 1255,1229 1258,1243 1262,1263 1265,1262 1268,1250 1272,1254 1275,1263 1278,1264 1282,1261 1285,1251 1288,1170 1292,1248 1295,1261 1298,1263 1302,1260 1305,1252 1308,1266 1312,1229 1315,1210 1318,1256 1322,1262 1325,1248 1328,1260 1332,1267 1335,1261 1338,1216 1342,1243 1345,1258 1348,1268 1352,1269 1355,1254 1358,1260 1362,1248 1365,1253 1368,1268 1375,1263 1378,1249 1382,1242 1395,1242 V1120 H50 Z"/>
</svg>
<path d="M60 1136H1383" stroke="#4c7018" stroke-width="2" fill="none"/>
<text class="p" x="1388" y="1132">proc:/proc/net/dev</text><text class="b" x="1388" y="1146">net.net</text>
<text class="c e" x="1517" y="1160">megabits/s</text>
<rect x="1388" y="1169" width="13" height="5" fill="#334426"/><rect x="1388" y="1169" width="13" height="1" fill="#66aa00"/><text class="l gr" x="1404" y="1174">received</text><text class="l gr e" x="1518" y="1174">-</text>
<rect x="1388" y="1183" width="13" height="5" fill="#522e2a"/><rect x="1388" y="1183" width="13" height="1" fill="#fe3912"/><text class="l re" x="1404" y="1188">sent</text><text class="l re e" x="1518" y="1188">-</text>

<!-- CHART 9 -->
<text class="t" x="63" y="1281">Disk I/O Bandwidth (disk.sdb)</text>
<path class="g" d="M63 1302.500H1386M63 1328.500H1386M63 1354.500H1386M63 1379.500H1386M63 1405.500H1386"/>
<line x1="110" y1="1357" x2="1386" y2="1357" stroke="#283236" stroke-width="144" stroke-dasharray="1 48.970"/>
<text class="y" x="60" y="1310">11,7</text><text class="y" x="60" y="1336">9,8</text><text class="y" x="60" y="1362">7,8</text><text class="y" x="60" y="1387">5,9</text><text class="y" x="60" y="1413">3,9</text>
<text class="r" transform="translate(17 1366) rotate(-90)">MiB/s</text>
<svg x="63" y="1285" width="1323" height="144" viewBox="63 1285 1323 144">
<path class="grn" d="M50,1308 63,1308 68,1312 72,1330 76,1312 80,1320 83,1335 86,1372 90,1325 94,1315 98,1322 102,1395 106,1330 110,1335 115,1322 120,1316 125,1328 130,1312 135,1335 140,1318 144,1300 150,1315 155,1325 160,1330 166,1318 172,1338 178,1322 184,1335 190,1318 196,1332 202,1322 208,1340 213,1322 216,1300 219,1345 222,1408 226,1330 230,1320 234,1352 238,1330 241,1310 245,1375 249,1320 252,1335 256,1322 260,1340 265,1330 269,1345 273,1385 277,1330 282,1315 288,1325 294,1340 298,1325 302,1296 306,1330 312,1325 318,1335 324,1320 330,1330 336,1322 342,1340 348,1325 354,1335 360,1315 366,1330 372,1318 378,1335 384,1325 390,1332 396,1320 400,1329 403,1311 406,1319 409,1321 413,1311 416,1329 419,1323 423,1327 426,1327 429,1322 433,1395 436,1336 439,1326 443,1311 446,1304 449,1303 453,1306 456,1321 459,1307 466,1315 469,1314 473,1325 476,1318 479,1349 483,1404 486,1321 489,1295 493,1308 496,1313 499,1299 503,1311 506,1314 509,1333 513,1305 516,1310 519,1309 526,1315 529,1373 533,1311 536,1303 543,1306 546,1303 549,1313 553,1318 556,1335 559,1429 563,1322 566,1309 569,1329 573,1312 576,1310 579,1320 583,1315 586,1313 593,1326 599,1304 603,1318 609,1326 613,1310 616,1323 619,1319 623,1311 629,1320 633,1311 636,1308 639,1311 643,1329 649,1310 656,1310 659,1321 663,1307 669,1308 673,1312 676,1367 679,1343 683,1316 686,1327 689,1295 693,1309 696,1295 699,1300 703,1362 706,1323 709,1309 713,1309 716,1320 719,1318 726,1306 729,1308 733,1362 736,1379 739,1309 743,1312 746,1308 749,1318 753,1339 756,1355 759,1299 763,1297 766,1297 769,1306 773,1323 776,1307 779,1358 783,1311 786,1299 789,1297 793,1286 796,1290 799,1288 803,1349 806,1325 809,1348 813,1303 819,1313 823,1307 829,1371 833,1303 836,1294 839,1306 843,1304 849,1309 853,1399 856,1313 859,1305 863,1311 866,1303 869,1299 873,1302 876,1319 879,1306 883,1329 886,1375 889,1303 896,1324 899,1301 903,1349 906,1368 909,1315 913,1312 916,1319 923,1306 926,1305 929,1374 933,1300 936,1297 939,1320 943,1303 946,1309 949,1308 953,1354 956,1336 959,1299 966,1305 969,1306 973,1313 976,1329 979,1382 983,1313 986,1303 989,1307 993,1305 996,1320 999,1318 1003,1344 1006,1319 1009,1299 1013,1299 1016,1302 1019,1313 1023,1303 1026,1339 1029,1358 1033,1310 1036,1318 1039,1302 1043,1300 1046,1302 1049,1299 1053,1328 1056,1324 1059,1310 1063,1310 1066,1315 1069,1315 1076,1307 1079,1290 1083,1299 1086,1367 1089,1318 1093,1299 1096,1296 1099,1304 1103,1349 1106,1306 1109,1332 1116,1308 1123,1309 1126,1360 1129,1346 1133,1294 1136,1390 1139,1319 1143,1299 1149,1304 1153,1305 1156,1317 1159,1306 1163,1304 1166,1298 1169,1310 1173,1308 1176,1338 1179,1341 1183,1304 1186,1378 1189,1309 1193,1323 1196,1302 1199,1306 1203,1332 1209,1309 1213,1350 1216,1311 1219,1310 1223,1309 1226,1310 1229,1357 1233,1309 1236,1331 1239,1314 1243,1304 1246,1301 1249,1303 1253,1309 1256,1346 1263,1304 1266,1306 1269,1312 1273,1311 1276,1304 1279,1301 1283,1306 1286,1318 1289,1418 1293,1323 1296,1306 1299,1303 1303,1303 1306,1313 1309,1307 1313,1341 1316,1362 1319,1306 1323,1304 1326,1318 1333,1297 1336,1311 1339,1358 1343,1324 1346,1306 1349,1298 1353,1299 1356,1309 1359,1305 1363,1316 1369,1299 1373,1300 1376,1296 1379,1314 1383,1327 1385,1303 1400,1303 V1445 H50 Z"/>
</svg>
<circle cx="773" cy="1325" r="4" fill="#66aa00"/>
<text class="c e" x="1520" y="1310">MiB/s</text>
<rect x="1391" y="1319" width="13" height="5" fill="#334426"/><rect x="1391" y="1319" width="13" height="1" fill="#66aa00"/><text class="l gr" x="1407" y="1324">reads</text><text class="l gr e" x="1521" y="1324">10,2</text>
<rect x="1422" y="1433" width="4" height="1" fill="#55585c"/><rect x="1462" y="1433" width="4" height="1" fill="#55585c"/><rect x="1520" y="1433" width="3" height="1" fill="#55585c"/>
</svg>
</body></html>
